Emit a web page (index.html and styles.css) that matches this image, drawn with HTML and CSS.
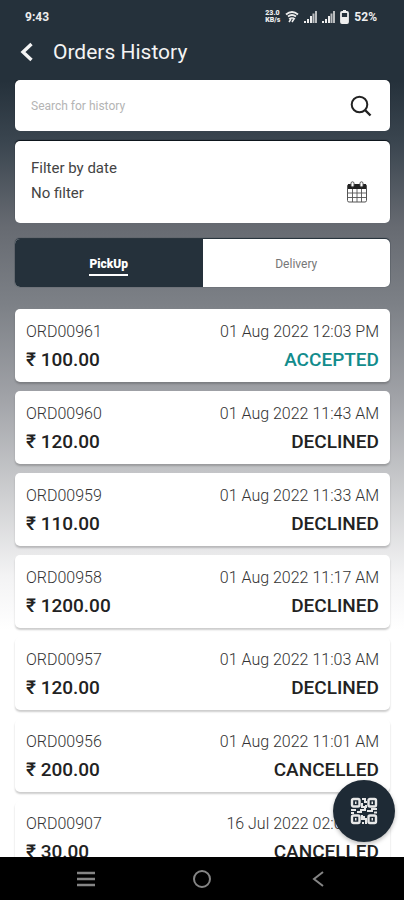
FILE: index.html
```html
<!DOCTYPE html>
<html lang="en">
<head>
<meta charset="utf-8">
<meta name="viewport" content="width=device-width, initial-scale=1">
<title>Orders History</title>
<link rel="stylesheet" href="styles.css">
</head>
<body>
<div class="app">
  <div class="status">
    <span class="clock">9:43</span>
    <div class="indicators">
      <span class="speed"><span>23.0</span><span>KB/s</span></span>
      <svg width="14" height="14" viewBox="0 0 14 14" fill="none" stroke="currentColor"><path d="M1 4.5Q7-.5 13 4.5M3 6.5q4-3 8 0" stroke-width="1.9"/><path d="M4 9q3-2 6 0M4 12l2-3M7 12l2.500-4" stroke-width="1.500"/></svg>
      <svg class="signal" width="13" height="12" viewBox="0 0 13 12" fill="currentColor"><path d="M0 10h2v2H0zM3 8h2v4H3zM6 5h2v7H6z"/><path d="M8.500 2.500h2V12h-2zM11 0h2v12h-2z" opacity=".75"/></svg>
      <svg class="signal" width="13" height="12" viewBox="0 0 13 12" fill="currentColor"><path d="M0 10h2v2H0zM3 8h2v4H3zM6 5h2v7H6z"/><path d="M8.500 2.500h2V12h-2zM11 0h2v12h-2z" opacity=".75"/></svg>
      <svg width="9" height="14" viewBox="0 0 9 14" fill="none" stroke="currentColor"><path d="M1 3q0-1 1-1h5q1 0 1 1v9q0 1-1 1H2q-1 0-1-1z" stroke-width="1.800"/><path d="M3 1h3" stroke-width="2"/><path d="M1 7h7v6H1z" fill="currentColor" stroke="none"/></svg>
      <span class="percent">52%</span>
    </div>
  </div>

  <header class="header">
    <button class="back" type="button" aria-label="Back"><svg width="14" height="20" viewBox="0 0 14 20" fill="none" stroke="currentColor" stroke-width="3.400"><path d="M11.500 2 3 10l8.500 8"/></svg></button>
    <h1>Orders History</h1>
  </header>

  <main class="content">
    <form class="panel search">
      <input type="text" placeholder="Search for history" aria-label="Search for history">
      <button type="button" aria-label="Search"><svg width="22" height="22" viewBox="0 0 22 22" fill="none" stroke="currentColor" stroke-width="2"><circle cx="9.500" cy="9.500" r="7.800"/><path d="m15 15 5.500 5.500" stroke-width="2.400"/></svg></button>
    </form>

    <section class="panel filter">
      <div><p>Filter by date</p><p>No filter</p></div>
      <button type="button" aria-label="Choose date"><svg width="20" height="22" viewBox="0 0 20 22" fill="none" stroke="currentColor"><rect x=".5" y="3.500" width="19" height="17.500" rx="1.500" stroke="#555"/><path d="M1 3h18v5H1z" fill="currentColor" stroke="none"/><path d="M1 12h18M1 16.500h18M5.500 8v13M10 8v13M14.500 8v13" stroke="#555" stroke-width=".9"/><rect x="4" y=".8" width="3" height="5" rx="1.500" fill="#fff" stroke="#555"/><rect x="13" y=".8" width="3" height="5" rx="1.500" fill="#fff" stroke="#555"/></svg></button>
    </section>

    <div class="tabs" role="tablist">
      <button type="button" role="tab" aria-selected="true"><span>PickUp</span></button>
      <button type="button" role="tab" aria-selected="false"><span>Delivery</span></button>
    </div>

    <ul class="orders">
      <li class="order"><span>ORD00961</span><time>01 Aug 2022 12:03 PM</time><strong>₹ 100.00</strong><strong class="accepted">ACCEPTED</strong></li>
      <li class="order"><span>ORD00960</span><time>01 Aug 2022 11:43 AM</time><strong>₹ 120.00</strong><strong>DECLINED</strong></li>
      <li class="order"><span>ORD00959</span><time>01 Aug 2022 11:33 AM</time><strong>₹ 110.00</strong><strong>DECLINED</strong></li>
      <li class="order"><span>ORD00958</span><time>01 Aug 2022 11:17 AM</time><strong>₹ 1200.00</strong><strong>DECLINED</strong></li>
      <li class="order"><span>ORD00957</span><time>01 Aug 2022 11:03 AM</time><strong>₹ 120.00</strong><strong>DECLINED</strong></li>
      <li class="order"><span>ORD00956</span><time>01 Aug 2022 11:01 AM</time><strong>₹ 200.00</strong><strong>CANCELLED</strong></li>
      <li class="order"><span>ORD00907</span><time>16 Jul 2022 02:03 PM</time><strong>₹ 30.00</strong><strong>CANCELLED</strong></li>
    </ul>
  </main>

  <div class="dock">
    <button class="scan" type="button" aria-label="Scan QR code">
      <svg width="28" height="28" viewBox="0 0 28 28" fill="none" stroke="currentColor" stroke-width="2.400"><rect x="2" y="2" width="7.500" height="7.500" rx="1.500"/><rect x="18.500" y="2" width="7.500" height="7.500" rx="1.500"/><rect x="2" y="18.500" width="7.500" height="7.500" rx="1.500"/><rect x="18.500" y="18.500" width="7.500" height="7.500" rx="1.500"/><path d="M5 5.800h1.500M21.500 5.800H23M5 22.200h1.500M21.500 22.200H23"/><path d="M12 2h3v3h2M12 6v4h4V8M1 13h4v-1M7 15h4v-2h4v-2M1 16h3M17 14h5v-2h5M24 15.500h3M12 18v4h2v-3M12 26h2M16 21v5h1" stroke-width="2"/></svg>
    </button>
    <nav class="system" aria-label="System navigation">
      <button type="button" aria-label="Recent apps"><svg width="20" height="16" viewBox="0 0 20 16" fill="none" stroke="currentColor" stroke-width="2.400"><path d="M1 2h18M1 8h18M1 14h18"/></svg></button>
      <button type="button" aria-label="Home"><svg width="20" height="20" viewBox="0 0 20 20" fill="none" stroke="currentColor" stroke-width="2"><circle cx="10" cy="10" r="8"/></svg></button>
      <button type="button" aria-label="Back"><svg width="12" height="18" viewBox="0 0 12 18" fill="none" stroke="currentColor" stroke-width="2"><path d="M11 2 2 9l9 7"/></svg></button>
    </nav>
  </div>
</div>
</body>
</html>
```
FILE: styles.css
```css
* { box-sizing: border-box; }

body {
  margin: 0;
  font-family: Roboto, "Liberation Sans", sans-serif;
  color: #222;
}

h1, p, ul { margin: 0; padding: 0; }

button {
  border: 0;
  padding: 0;
  background: none;
  color: inherit;
  font: inherit;
}

svg { display: block; }

.app {
  display: flex;
  flex-direction: column;
  height: 100vh;
  overflow: hidden;
  background: linear-gradient(#25313b 9%, #3b4650 16%, #666a71 25%, #7d8187 34%, #a0a2a7 44%, #cecfd1 55%, #f3f3f4 64%, #fff 70%);
}

.status {
  display: flex;
  align-items: center;
  justify-content: space-between;
  height: 34px;
  padding: 0 27px 0 25px;
  color: #eee;
}

.clock, .percent { font-size: 12px; font-weight: 700; }
.indicators { display: flex; align-items: center; gap: 5px; }

.speed {
  display: flex;
  flex-direction: column;
  font-size: 7px;
  font-weight: 900;
  line-height: 7px;
}

.header {
  display: flex;
  align-items: center;
  gap: 19px;
  height: 46px;
  padding: 0 20px 10px;
  color: #f4f4f4;
}

.header h1 { font-size: 21px; font-weight: 400; line-height: 26px; }

.content {
  display: flex;
  flex: 1;
  flex-direction: column;
  min-height: 0;
  overflow: hidden;
  padding: 0 14px 0 15px;
}

.panel {
  display: flex;
  flex-shrink: 0;
  align-items: center;
  justify-content: space-between;
  padding: 0 18px 0 16px;
  border-radius: 5px;
  background: #fff;
  box-shadow: 0 -1px 1px #0b1118;
}

.search { height: 51px; }

.search input {
  flex: 1;
  min-width: 0;
  padding: 0;
  border: 0;
  outline: 0;
  font: 12px Roboto, sans-serif;
}

.search input::placeholder { color: #b4b4b4; }

.filter { height: 82px; margin-top: 10px; padding-right: 23px; }
.filter div { padding-bottom: 3px; }
.filter p { color: #444; font-size: 15px; line-height: 25px; }
.filter button { padding-top: 20px; }

.tabs {
  display: grid;
  flex-shrink: 0;
  grid-template-columns: 1fr 1fr;
  height: 48px;
  margin-top: 16px;
  overflow: hidden;
  border-radius: 5px;
  background: #fff;
  box-shadow: 0 0 1px #25313b, 0 -1px 1px #25313b;
}

.tabs button { color: #777; font-size: 12px; }
.tabs [aria-selected="true"] { background: #25313b; color: #fff; font-weight: 900; }
.tabs span { display: inline-block; margin-top: 2px; line-height: 20px; }
.tabs [aria-selected="true"] span { border-bottom: 2px solid #fff; margin-top: 4px; }

.orders {
  display: flex;
  flex-direction: column;
  gap: 9px;
  margin-top: 22px;
  list-style: none;
}

.order {
  display: grid;
  grid-template-columns: auto auto;
  align-content: center;
  justify-content: space-between;
  height: 73px;
  padding: 0 11px;
  border-radius: 5px;
  background: #fff;
  box-shadow: 0 2px 2px #0003;
  font-size: 16px;
  line-height: 28px;
}

.order > :nth-child(even) { text-align: right; }
.order span, .order time { color: #333; font-weight: 300; }
.order strong { font-size: 19px; font-weight: 500; }
.order .accepted { color: #128c8c; }

.dock { position: relative; flex-shrink: 0; }

.scan {
  position: absolute;
  right: 9px;
  bottom: 58px;
  display: grid;
  place-items: center;
  width: 62px;
  height: 62px;
  border-radius: 50%;
  background: #1e2a35;
  color: #e8e8e8;
  box-shadow: 0 2px 4px #0004;
}

.system {
  display: grid;
  grid-template-columns: 1fr 1fr 1fr;
  align-items: center;
  height: 43px;
  padding: 0 28px;
  background: #000;
  color: #858585;
}

.system button { display: grid; place-items: center; }
```
